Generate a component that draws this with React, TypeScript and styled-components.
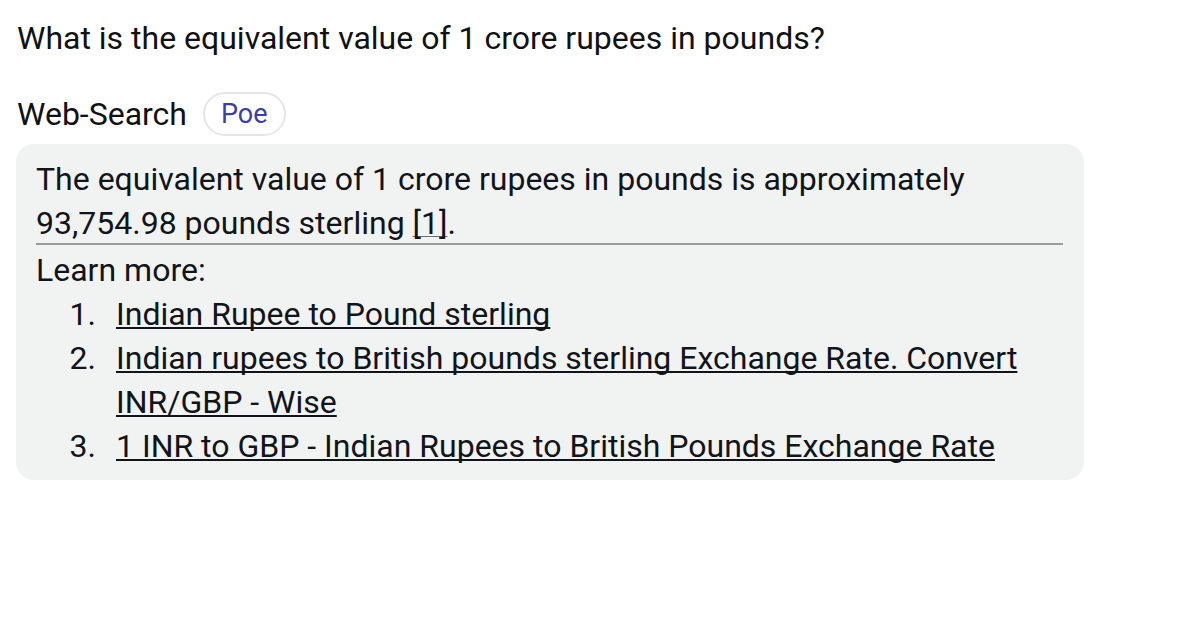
import React from "react";
import styled, { createGlobalStyle } from "styled-components";

const Global = createGlobalStyle`
  html, body { margin: 0; padding: 0; background: #ffffff; }
  body { font-family: Roboto, "Liberation Sans", Arial, sans-serif; color: #111418; }
`;

const Page = styled.div`
  padding: 16px 16px 0 16px;
  width: 1068px;
`;

const Question = styled.div`
  font-size: 32px;
  line-height: 44px;
  color: #111111;
  padding-left: 1px;
`;

const BotRow = styled.div`
  display: flex;
  align-items: center;
  gap: 16px;
  margin-top: 32px;
  height: 44px;
`;

const BotName = styled.span`
  font-size: 32px;
  color: #111111;
  padding-left: 1px;
`;

const Pill = styled.span`
  display: inline-flex;
  align-items: center;
  height: 44px;
  box-sizing: border-box;
  padding: 0 16px;
  border: 2px solid #e4e6e8;
  border-radius: 22px;
  font-size: 27px;
  color: #3d3da6;
`;

const Bubble = styled.div`
  margin-top: 8px;
  background: #f1f2f2;
  border-radius: 18px;
  padding: 13px 21px 12px 20px;
  font-size: 32px;
  line-height: 44px;
  color: #111418;
`;

const Para = styled.p`
  margin: 0;
`;

const Cite = styled.a`
  color: inherit;
  text-decoration: underline;
  text-decoration-color: #6b6f73;
  text-decoration-skip-ink: none;
  text-underline-offset: 2px;
  text-decoration-thickness: 1px;
`;

const Rule = styled.hr`
  margin: -2px 0 3px 0;
  border: 0;
  border-top: 2px solid #9a9a9a;
`;

const List = styled.ol`
  list-style: none;
  margin: 0;
  padding: 0;
`;

const Item = styled.li`
  display: flex;
  gap: 20px;
`;

const Num = styled.span`
  flex: 0 0 60px;
  text-align: right;
`;

const Link = styled.a`
  color: #111418;
  text-decoration: underline;
  text-decoration-skip-ink: none;
  text-underline-offset: 2px;
  text-decoration-thickness: 1.5px;
`;

const links = [
  "Indian Rupee to Pound sterling",
  "Indian rupees to British pounds sterling Exchange Rate. Convert INR/GBP - Wise",
  "1 INR to GBP - Indian Rupees to British Pounds Exchange Rate",
];

export default function App() {
  return (
    <>
      <Global />
      <Page>
        <Question>What is the equivalent value of 1 crore rupees in pounds?</Question>
        <BotRow>
          <BotName>Web-Search</BotName>
          <Pill>Poe</Pill>
        </BotRow>
        <Bubble>
          <Para>
            The equivalent value of 1 crore rupees in pounds is approximately
            93,754.98 pounds sterling <Cite href="#">[1]</Cite>.
          </Para>
          <Rule />
          <Para>Learn more:</Para>
          <List>
            {links.map((l, i) => (
              <Item key={i}>
                <Num>{i + 1}.</Num>
                <Link href="#">{l}</Link>
              </Item>
            ))}
          </List>
        </Bubble>
      </Page>
    </>
  );
}
